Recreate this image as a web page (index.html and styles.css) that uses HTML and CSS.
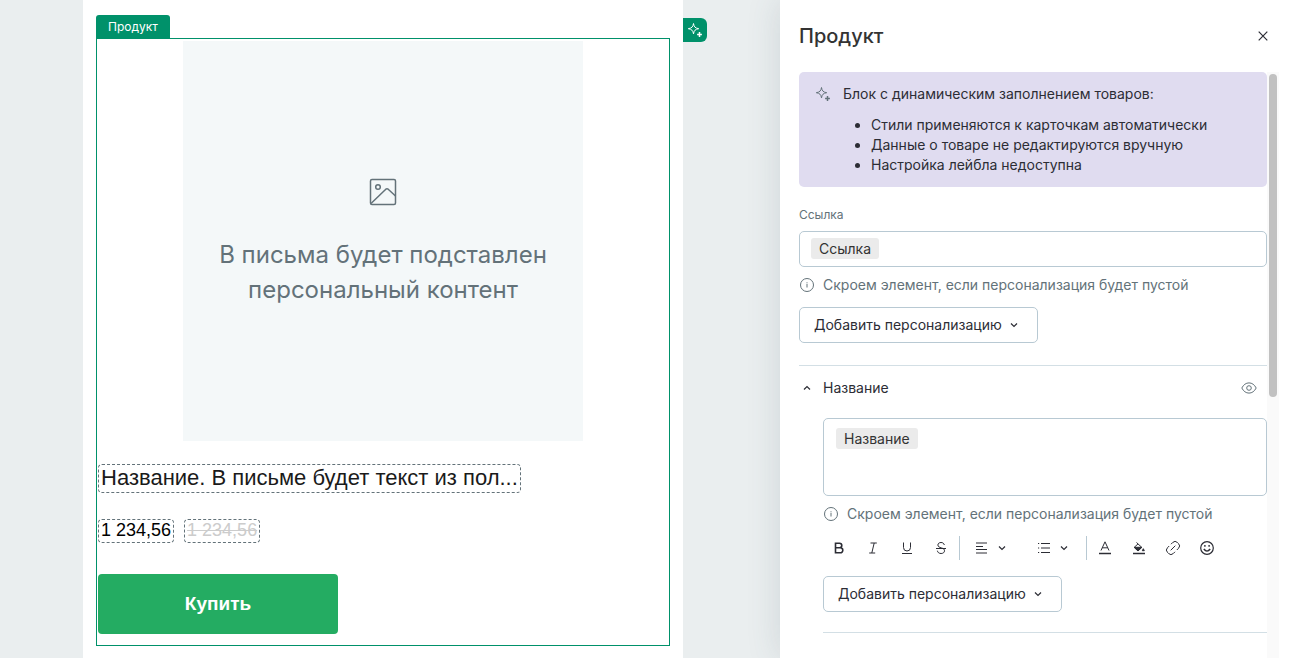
FILE: index.html
```html
<!DOCTYPE html>
<html lang="ru">
<head>
<meta charset="utf-8">
<title>Продукт</title>
<meta name="viewport" content="width=device-width, initial-scale=1">
<link rel="stylesheet" href="styles.css">
</head>
<body>
<svg class="sprite" aria-hidden="true">
  <symbol id="sparkle" viewBox="0 0 16 16"><path d="M6.500 1.500C7 4.900 8.300 6.200 11.700 6.700 8.300 7.200 7 8.500 6.500 11.900 6 8.500 4.700 7.200 1.300 6.700 4.700 6.200 6 4.900 6.500 1.500Z"/><path d="M12.500 10.100v4.800M10.100 12.500h4.800" stroke-width="1.500"/></symbol>
  <symbol id="down" viewBox="0 0 16 16"><path d="M5 6.500 8 9.500l3-3" stroke-width="1.200"/></symbol>
  <symbol id="info" viewBox="0 0 16 16"><circle cx="8" cy="8" r="6.500"/><path d="M8 7v3.500M8 5.300v1"/></symbol>
</svg>
<main class="editor">
  <section class="canvas" aria-label="Письмо">
    <div class="sheet">
      <button class="magic" type="button" aria-label="Динамический блок"><svg class="icon"><use href="#sparkle"/></svg></button>
      <span class="tab">Продукт</span>
      <article class="product">
        <div class="placeholder">
          <svg class="picture" viewBox="0 0 32 32"><rect x="3.500" y="3.500" width="25" height="25" rx="1.500"/><circle cx="11" cy="11" r="2.300"/><path d="M4 27.500 18.800 13.200q1.200-1 2.400 0L28.500 20"/></svg>
          <p class="placeholder-text">В письма будет подставлен персональный контент</p>
        </div>
        <h2 class="name dashed">Название. В письме будет текст из пол...</h2>
        <div class="prices">
          <span class="price dashed">1 234,56</span>
          <s class="price old dashed">1 234,56</s>
        </div>
        <button class="buy" type="button">Купить</button>
      </article>
    </div>
  </section>
  <aside class="panel">
    <header class="panel-head">
      <h1 class="title">Продукт</h1>
      <button class="close" type="button" aria-label="Закрыть"><svg class="icon" viewBox="0 0 16 16"><path d="m3.700 3.700 8.600 8.600m0-8.600-8.600 8.600" stroke-width="1.200"/></svg></button>
    </header>
    <div class="scroller">
      <div class="content">
        <div class="notice">
          <svg class="icon muted"><use href="#sparkle"/></svg>
          <div class="notice-body">
            <p class="notice-title">Блок с динамическим заполнением товаров:</p>
            <ul class="notice-list">
              <li>Стили применяются к карточкам автоматически</li>
              <li>Данные о товаре не редактируются вручную</li>
              <li>Настройка лейбла недоступна</li>
            </ul>
          </div>
        </div>
        <label class="label" for="link">Ссылка</label>
        <div class="field"><span class="chip">Ссылка</span><input class="entry" id="link" type="text"></div>
        <p class="hint"><svg class="icon"><use href="#info"/></svg>Скроем элемент, если персонализация будет пустой</p>
        <button class="add" type="button">Добавить персонализацию<svg class="icon"><use href="#down"/></svg></button>
        <section class="group">
          <div class="group-head">
            <button class="toggle" type="button"><svg class="icon" viewBox="0 0 16 16"><path d="m5 9.500 3-3 3 3" stroke-width="1.200"/></svg>Название</button>
            <button class="eye" type="button" aria-label="Показать"><svg class="icon" viewBox="0 0 16 16"><path d="M.8 8C2.500 4.700 5 2.900 8 2.900S13.500 4.700 15.200 8C13.500 11.300 11 13.100 8 13.100S2.500 11.300.8 8Z"/><circle cx="8" cy="8" r="2.300"/></svg></button>
          </div>
          <div class="group-body">
            <div class="field area"><span class="chip">Название</span><textarea class="entry" aria-label="Название"></textarea></div>
            <p class="hint"><svg class="icon"><use href="#info"/></svg>Скроем элемент, если персонализация будет пустой</p>
            <div class="toolbar" role="toolbar">
              <div class="tools">
                <button class="tool" type="button" aria-label="Жирный"><svg class="icon bold" viewBox="0 0 16 16"><path d="M4.500 3.200h4a2.300 2.300 0 0 1 0 4.600h-4zM4.500 7.800h4.800a2.500 2.500 0 0 1 0 5H4.500z"/></svg></button>
                <button class="tool" type="button" aria-label="Курсив"><svg class="icon" viewBox="0 0 16 16"><path d="M5.500 3h6.300M4.200 13h6M9.200 3 6.800 13"/></svg></button>
                <button class="tool" type="button" aria-label="Подчёркнутый"><svg class="icon" viewBox="0 0 16 16"><path d="M4.500 2.500v5a3.500 3.500 0 0 0 7 0v-5M3 13.500h10"/></svg></button>
                <button class="tool" type="button" aria-label="Зачёркнутый"><svg class="icon" viewBox="0 0 16 16"><path d="M11.300 5C11 3.400 9.800 2.500 8 2.500 6.200 2.500 4.900 3.500 4.900 5c0 1.700 1.500 2.300 3.500 2.900 2 .6 3.100 1.300 3.100 2.900s-1.400 2.700-3.400 2.700-3.500-1-3.700-2.800M3 8.500h10"/></svg></button>
              </div>
              <div class="tools menus">
                <button class="tool" type="button" aria-label="Выравнивание"><span class="slot"><svg class="icon" viewBox="0 0 16 16"><path d="M2 3h11M2 6.500h7M2 9.500h11M2 13h11"/></svg></span><svg class="icon"><use href="#down"/></svg></button>
                <button class="tool" type="button" aria-label="Список"><span class="slot"><svg class="icon" viewBox="0 0 16 16"><path d="M5 3.500h9M5 8h9M5 12.500h9M2 3.500h1.200M2 8h1.200M2 12.500h1.200"/></svg></span><svg class="icon"><use href="#down"/></svg></button>
              </div>
              <div class="tools last">
                <button class="tool" type="button" aria-label="Цвет текста"><svg class="icon" viewBox="0 0 16 16"><path d="M4 10.500 8 1.800l4 8.700M5.300 7.800h5.400"/><path d="M2 13.500h12" stroke-width="1.500"/></svg></button>
                <button class="tool" type="button" aria-label="Заливка"><svg class="icon" viewBox="0 0 16 16"><path d="m5.500 2.500 5.300 4.900L7 11 3.200 7.400 7 3.900"/><path class="solid" d="M3.200 7.300h7.600L7 11ZM12.300 8.700l1 2h-2Z"/><path d="M2 13.500h12" stroke-width="1.500"/></svg></button>
                <button class="tool" type="button" aria-label="Ссылка"><svg class="icon" viewBox="0 0 16 16"><path d="M6 4.200 7.700 2.500a3.300 3.300 0 0 1 4.700 0l1.100 1.100a3.300 3.300 0 0 1 0 4.700L11.800 10M10 11.800l-1.700 1.700a3.300 3.300 0 0 1-4.700 0l-1.100-1.100a3.300 3.300 0 0 1 0-4.700L4.200 6M5.700 10.300l4.600-4.600"/></svg></button>
                <button class="tool" type="button" aria-label="Эмодзи"><svg class="icon" viewBox="0 0 16 16"><circle cx="8" cy="8" r="6.300" stroke-width="1.200"/><path d="M4.800 9q3.200 4.200 6.400 0" stroke-width="1.400"/><path d="M5.900 5v1.800M10.100 5v1.800" stroke-width="1.400"/></svg></button>
              </div>
            </div>
            <button class="add" type="button">Добавить персонализацию<svg class="icon"><use href="#down"/></svg></button>
            <hr class="line">
          </div>
        </section>
      </div>
      <div class="track"><div class="thumb"></div></div>
    </div>
  </aside>
</main>
</body>
</html>
```
FILE: styles.css
```css
* { box-sizing: border-box; }
body { margin: 0; background: #fff; color: #2c2d35; font: 14px/20px Inter, sans-serif; font-optical-sizing: none; }
h1, h2, p, ul { margin: 0; }
button { margin: 0; padding: 0; border: 0; background: none; color: inherit; font: inherit; cursor: pointer; }
.sprite { position: absolute; width: 0; height: 0; }
.icon { flex: none; display: block; width: 16px; height: 16px; fill: none; stroke: currentColor; }

.editor { display: flex; height: 100vh; overflow: hidden; }
.canvas { flex: 1; display: flex; justify-content: center; padding-right: 14px; background: #eaeeef; }
.sheet { position: relative; display: flex; flex-direction: column; align-items: flex-start; width: 600px; padding: 15px 13px; background: #fff; }
.magic { position: absolute; left: 100%; top: 18px; display: grid; place-items: center; width: 24px; height: 24px; border-radius: 0 6px 6px 0; background: #00916a; color: #fff; }
.tab { padding: 0 12px; border-radius: 3px 3px 0 0; background: #00916a; color: #fff; font-size: 12px; line-height: 23px; }
.product { display: flex; flex-direction: column; align-items: flex-start; width: 100%; padding: 2px 1px 11px; border: 1px solid #00916a; font-family: "Liberation Sans", Arial, sans-serif; }
.placeholder { display: flex; flex-direction: column; align-items: center; align-self: center; gap: 29px; width: 400px; height: 400px; padding: 135px 20px 0; background: #f4f8f9; color: #637279; font-family: Inter, sans-serif; }
.picture { width: 32px; height: 32px; fill: none; stroke: currentColor; stroke-width: 1.5; }
.placeholder-text { font-size: 24px; line-height: 35px; text-align: center; }
.dashed { padding: 0 2px; border: 1px dashed #637279; border-radius: 4px; }
.name { margin-top: 23px; padding-bottom: 2px; color: #1a1a1a; font-size: 22px; font-weight: 400; line-height: 25px; }
.prices { display: flex; gap: 10px; margin-top: 26px; }
.price { padding-bottom: 2px; color: #000; font-size: 18px; line-height: 20px; }
.old { color: #ccc; }
.buy { width: 240px; height: 60px; margin-top: 31px; border-radius: 4px; background: #24ac62; color: #fff; font-size: 19px; font-weight: 700; }

.panel { position: relative; display: flex; flex-direction: column; flex: 0 0 517px; padding: 0 18px 0 19px; background: #fff; box-shadow: 0 0 32px rgba(60, 85, 100, .16); }
.panel-head { display: flex; flex: none; align-items: center; justify-content: space-between; height: 72px; padding-right: 8px; }
.title { color: #333; font-size: 20px; font-weight: 500; line-height: 28px; }
.scroller { display: flex; flex: 1; min-height: 0; overflow: hidden; }
.content { flex: 1; min-width: 0; }
.track { flex: 0 0 12px; padding: 2px; background: #fafafa; }
.thumb { height: 323px; border-radius: 4px; background: #c1c1c1; }
.notice { display: flex; gap: 12px; padding: 12px 16px; border-radius: 5px; background: #e0dcf0; }
.notice .icon { margin-top: 2px; }
.muted { color: #637279; }
.notice-list { margin-top: 11px; padding-left: 28px; }
.label { display: block; margin: 20px 0 8px; color: #637279; font-size: 12px; line-height: 16px; }
.field { display: flex; align-items: center; height: 36px; padding: 0 11px 1px; border: 1px solid #b8c9d3; border-radius: 5px; }
.area { align-items: flex-start; height: 78px; padding: 9px 12px; }
.chip { flex: none; padding: 0 8px; border-radius: 3px; background: #ebebeb; color: #333; line-height: 21px; }
.entry { flex: 1; min-width: 0; height: 100%; padding: 0 4px; border: 0; outline: 0; background: none; color: inherit; font: inherit; resize: none; }
.hint { display: flex; align-items: center; gap: 8px; margin: 8px 0 12px; color: #637279; }
.add { display: flex; align-items: center; gap: 4px; height: 36px; padding: 0 15px 0 14px; border: 1px solid #b8c9d3; border-radius: 5px; }
.group { margin-top: 22px; border-top: 1px solid #d3dfe5; }
.group-head { display: flex; align-items: center; justify-content: space-between; padding: 12px 10px 20px 0; }
.toggle { display: flex; align-items: center; gap: 8px; }
.eye { color: #637279; }
.group-body { padding-left: 24px; }
.toolbar { display: flex; height: 24px; margin-bottom: 16px; padding-left: 4px; }
.tools { display: flex; gap: 10px; padding-right: 6px; border-right: 1px solid #b8c9d3; }
.menus { gap: 22px; padding: 0 14px 0 10px; }
.last { padding: 0 0 0 6px; border: 0; }
.tool { display: flex; align-items: center; justify-content: center; min-width: 24px; height: 24px; }
.slot { display: grid; place-items: center; width: 24px; }
.bold { stroke-width: 1.6; }
.solid { fill: currentColor; }
.line { height: 1px; margin: 20px 0 0; border: 0; background: #d3dfe5; }
```
